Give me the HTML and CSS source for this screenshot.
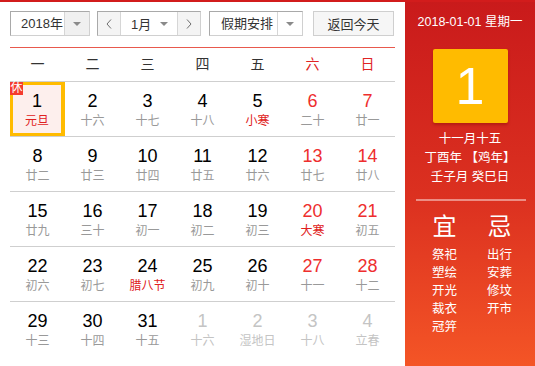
FILE: index.html
```html
<!DOCTYPE html>
<html lang="zh-CN">
<head>
  <meta charset="UTF-8" />
  <meta name="viewport" content="width=device-width, initial-scale=1.0" />
  <title>万年历</title>
  <link rel="stylesheet" href="styles.css">
</head>
<body>

  <div class="calendar">
    <div class="main">
      <div class="toolbar">
        <div class="select year-select">
          <span class="select-value">2018年</span>
          <span class="select-arrow grey"><i class="caret"></i></span>
        </div>
        <div class="month-select">
          <span class="month-nav">
            <svg width="6" height="10" viewBox="0 0 6 10"><path d="M5 0.5 L1 5 L5 9.5" fill="none" stroke="#6f6f6f" stroke-width="1"/></svg>
          </span>
          <span class="month-value">1月<i class="caret"></i></span>
          <span class="month-nav">
            <svg width="6" height="10" viewBox="0 0 6 10"><path d="M1 0.5 L5 5 L1 9.5" fill="none" stroke="#6f6f6f" stroke-width="1"/></svg>
          </span>
        </div>
        <div class="select holiday-select">
          <span class="select-value">假期安排</span>
          <span class="select-arrow"><i class="caret"></i></span>
        </div>
        <button class="today-btn">返回今天</button>
      </div>

      <div class="week-head">
        <span>一</span><span>二</span><span>三</span><span>四</span><span>五</span>
        <span class="weekend">六</span><span class="weekend">日</span>
      </div>

      <div class="days">
        <div class="week-row">
          <div class="day selected"><span class="rest">休</span><b class="num">1</b><span class="lunar festival">元旦</span></div>
          <div class="day"><b class="num">2</b><span class="lunar">十六</span></div>
          <div class="day"><b class="num">3</b><span class="lunar">十七</span></div>
          <div class="day"><b class="num">4</b><span class="lunar">十八</span></div>
          <div class="day"><b class="num">5</b><span class="lunar festival">小寒</span></div>
          <div class="day weekend"><b class="num">6</b><span class="lunar">二十</span></div>
          <div class="day weekend"><b class="num">7</b><span class="lunar">廿一</span></div>
        </div>
        <div class="week-row">
          <div class="day"><b class="num">8</b><span class="lunar">廿二</span></div>
          <div class="day"><b class="num">9</b><span class="lunar">廿三</span></div>
          <div class="day"><b class="num">10</b><span class="lunar">廿四</span></div>
          <div class="day"><b class="num">11</b><span class="lunar">廿五</span></div>
          <div class="day"><b class="num">12</b><span class="lunar">廿六</span></div>
          <div class="day weekend"><b class="num">13</b><span class="lunar">廿七</span></div>
          <div class="day weekend"><b class="num">14</b><span class="lunar">廿八</span></div>
        </div>
        <div class="week-row">
          <div class="day"><b class="num">15</b><span class="lunar">廿九</span></div>
          <div class="day"><b class="num">16</b><span class="lunar">三十</span></div>
          <div class="day"><b class="num">17</b><span class="lunar">初一</span></div>
          <div class="day"><b class="num">18</b><span class="lunar">初二</span></div>
          <div class="day"><b class="num">19</b><span class="lunar">初三</span></div>
          <div class="day weekend"><b class="num">20</b><span class="lunar festival">大寒</span></div>
          <div class="day weekend"><b class="num">21</b><span class="lunar">初五</span></div>
        </div>
        <div class="week-row">
          <div class="day"><b class="num">22</b><span class="lunar">初六</span></div>
          <div class="day"><b class="num">23</b><span class="lunar">初七</span></div>
          <div class="day"><b class="num">24</b><span class="lunar festival">腊八节</span></div>
          <div class="day"><b class="num">25</b><span class="lunar">初九</span></div>
          <div class="day"><b class="num">26</b><span class="lunar">初十</span></div>
          <div class="day weekend"><b class="num">27</b><span class="lunar">十一</span></div>
          <div class="day weekend"><b class="num">28</b><span class="lunar">十二</span></div>
        </div>
        <div class="week-row">
          <div class="day"><b class="num">29</b><span class="lunar">十三</span></div>
          <div class="day"><b class="num">30</b><span class="lunar">十四</span></div>
          <div class="day"><b class="num">31</b><span class="lunar">十五</span></div>
          <div class="day other"><b class="num">1</b><span class="lunar">十六</span></div>
          <div class="day other"><b class="num">2</b><span class="lunar">湿地日</span></div>
          <div class="day other"><b class="num">3</b><span class="lunar">十八</span></div>
          <div class="day other"><b class="num">4</b><span class="lunar">立春</span></div>
        </div>
      </div>
    </div>

    <div class="side">
      <div class="side-date">2018-01-01 星期一</div>
      <div class="big-day">1</div>
      <div class="side-lunar">
        <div>十一月十五</div>
        <div>丁酉年 【鸡年】</div>
        <div>壬子月 癸巳日</div>
      </div>
      <div class="side-line"></div>
      <div class="advice">
        <div class="advice-col">
          <div class="advice-title">宜</div>
          <div>祭祀</div>
          <div>塑绘</div>
          <div>开光</div>
          <div>裁衣</div>
          <div>冠笄</div>
        </div>
        <div class="advice-col">
          <div class="advice-title">忌</div>
          <div>出行</div>
          <div>安葬</div>
          <div>修坟</div>
          <div>开市</div>
        </div>
      </div>
    </div>
  </div>

</body>
</html>
```

FILE: styles.css
```css
/* Page */
body {
  margin: 0;
  font-family: "Liberation Sans", "Noto Sans CJK SC", sans-serif;
  background: #fff;
}

/* Whole widget */
.calendar {
  display: flex;
  width: 535px;
  height: 366px;
  border-top: 2px solid #d21c1c;
  box-sizing: border-box;
  overflow: hidden;
}

/* Left part: toolbar + month grid */
.main {
  width: 405px;
  padding: 0 10px;
  box-sizing: border-box;
}

.toolbar {
  display: flex;
  height: 25px;
  margin-top: 9px;
  font-size: 13px;
  color: #333;
}

.select,
.month-select {
  display: flex;
  height: 25px;
  border: 1px solid;
  border-color: #a9a9a9 #d0d0d0 #d0d0d0 #a9a9a9;
  box-sizing: border-box;
  background: #fff;
}

.select-value {
  flex: 1;
  line-height: 23px;
  padding-left: 10px;
}

.select-arrow {
  width: 24px;
  border-left: 1px solid #d6d6d6;
  display: flex;
  align-items: center;
  justify-content: center;
}

.select-arrow.grey {
  background: #f0f0f0;
}

.caret {
  display: inline-block;
  width: 0;
  height: 0;
  border-left: 4px solid transparent;
  border-right: 4px solid transparent;
  border-top: 4px solid #8a8a8a;
}

.year-select {
  width: 80px;
}

.month-select {
  width: 104px;
  margin-left: 7px;
}

.month-nav {
  width: 22px;
  background: #f4f4f4;
  display: flex;
  align-items: center;
  justify-content: center;
}

.month-value {
  flex: 1;
  display: flex;
  align-items: center;
  justify-content: space-between;
  padding: 0 9px 0 10px;
  border-left: 1px solid #d6d6d6;
  border-right: 1px solid #d6d6d6;
}

.holiday-select {
  width: 94px;
  margin-left: 8px;
}

.holiday-select .select-value {
  padding-left: 11px;
}

.today-btn {
  width: 81px;
  height: 25px;
  margin-left: 10px;
  padding: 0;
  border: 1px solid #cfcfcf;
  background: #f6f6f6;
  font: inherit;
  color: #333;
}

/* Weekday header */
.week-head {
  display: grid;
  grid-template-columns: repeat(7, 55px);
  margin-top: 11px;
  border-top: 1px solid #e8594d;
  height: 33px;
  line-height: 33px;
  text-align: center;
  font-size: 14px;
  color: #333;
}

.week-head .weekend {
  color: #e02424;
}

/* Day grid */
.week-row {
  display: grid;
  grid-template-columns: repeat(7, 55px);
  border-top: 1px solid #cfcfcf;
}

.day {
  position: relative;
  height: 54px;
  box-sizing: border-box;
  padding-top: 9px;
  text-align: center;
}

.num {
  display: block;
  font-weight: normal;
  font-size: 18px;
  line-height: 20px;
  color: #000;
}

.lunar {
  display: block;
  margin-top: 2px;
  font-size: 12px;
  line-height: 16px;
  color: #999;
}

.day.weekend .num {
  color: #ee2e2e;
}

.lunar.festival {
  color: #e02020;
}

.day.other .num,
.day.other .lunar {
  color: #c4c4c4;
}

.day.selected {
  border: 3px solid #ffbb00;
  border-right-width: 4px;
  background: #fdefed;
  padding-top: 6px;
}

.rest {
  position: absolute;
  left: -3px;
  top: -3px;
  width: 13px;
  height: 13px;
  background: #f43b2f;
  color: #fff;
  font-size: 12px;
  line-height: 13px;
  text-align: center;
}

/* Right panel */
.side {
  flex: 1;
  margin-top: -2px;
  background: linear-gradient(to bottom, #c91a1b, #dc3120 55%, #f45526);
  color: #fff;
  text-align: center;
  text-spacing-trim: space-all;
}

.side-date {
  margin-top: 12px;
  font-size: 12.5px;
  line-height: 20px;
}

.big-day {
  width: 75px;
  height: 74px;
  margin: 17px auto 0;
  background: #ffbb00;
  border-radius: 2px;
  box-shadow: 0 2px 3px rgba(120, 0, 0, 0.35);
  font-size: 52px;
  line-height: 74px;
}

.side-lunar {
  margin-top: 7px;
  font-size: 12.5px;
  line-height: 19px;
}

.side-line {
  height: 2px;
  margin: 12px 9px 0 11px;
  background: rgba(255, 255, 255, 0.45);
}

.advice {
  display: flex;
  padding-left: 12px;
  margin-top: 13px;
  font-size: 12.5px;
  line-height: 18px;
}

.advice-col {
  width: 55px;
}

.advice-title {
  font-size: 24px;
  line-height: 26px;
  margin-bottom: 6px;
}
```
